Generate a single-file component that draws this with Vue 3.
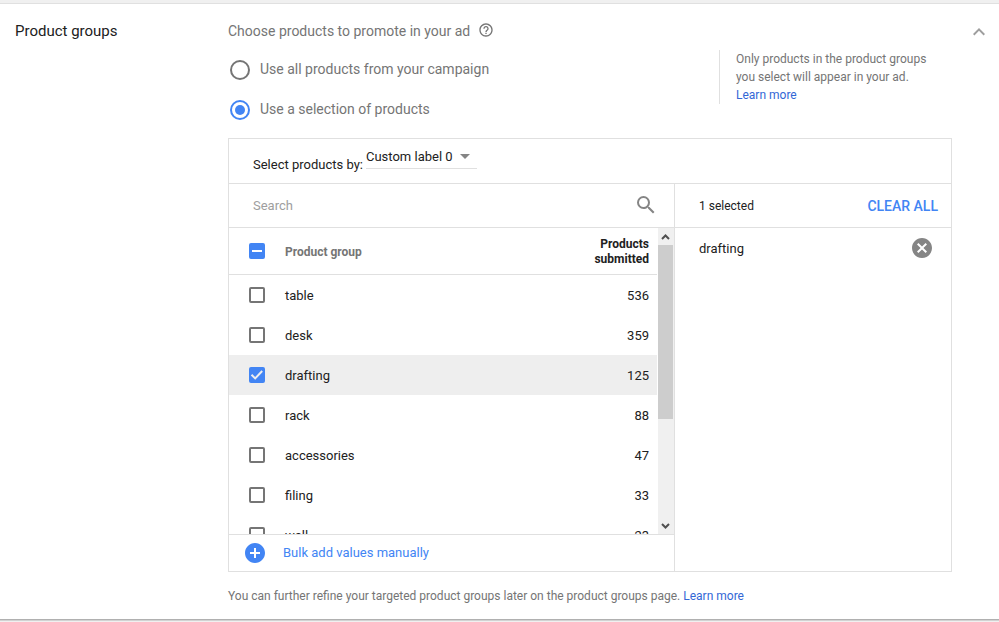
<script setup>
import { ref, computed } from 'vue'

const mode = ref('selection')
const attribute = ref('Custom label 0')
const attributes = ['Custom label 0', 'Custom label 1', 'Custom label 2']
const query = ref('')
const open = ref(true)
const list = ref(null)

const groups = ref([
  { name: 'table', count: 536, checked: false },
  { name: 'desk', count: 359, checked: false },
  { name: 'drafting', count: 125, checked: true },
  { name: 'rack', count: 88, checked: false },
  { name: 'accessories', count: 47, checked: false },
  { name: 'filing', count: 33, checked: false },
  { name: 'wall', count: 23, checked: false }
])

const visible = computed(() => groups.value.filter(g => g.name.includes(query.value.toLowerCase())))
const selected = computed(() => groups.value.filter(g => g.checked))
const allChecked = computed(() => selected.value.length === groups.value.length)
const someChecked = computed(() => selected.value.length > 0 && !allChecked.value)

function setAll(value) {
  groups.value.forEach(g => { g.checked = value })
}
function scrollList(step) {
  list.value.scrollTop += step
}
</script>

<template>
  <main class="page">
    <section class="card">
      <h2 class="title">Product groups</h2>

      <div class="content">
        <p class="lead">
          Choose products to promote in your ad
          <button class="icon-button help" type="button" aria-label="Help">
            <svg width="16" height="16" viewBox="0 0 24 24"><path d="M11 18h2v-2h-2v2zm1-16C6.48 2 2 6.48 2 12s4.480 10 10 10 10-4.480 10-10S17.520 2 12 2zm0 18c-4.410 0-8-3.590-8-8s3.590-8 8-8 8 3.590 8 8-3.590 8-8 8zm0-14c-2.210 0-4 1.790-4 4h2c0-1.100.9-2 2-2s2 .9 2 2c0 2-3 1.750-3 5h2c0-2.250 3-2.500 3-5 0-2.210-1.790-4-4-4z" /></svg>
          </button>
        </p>

        <div v-if="open" class="body">
          <div class="choice">
            <div class="radios">
              <label class="radio"><input v-model="mode" type="radio" name="mode" value="all"><span>Use all products from your campaign</span></label>
              <label class="radio"><input v-model="mode" type="radio" name="mode" value="selection"><span>Use a selection of products</span></label>
            </div>
            <aside class="hint">
              Only products in the product groups you select will appear in your ad.
              <a href="#">Learn more</a>
            </aside>
          </div>

          <div class="picker">
            <div class="attribute">
              <label for="attribute">Select products by:</label>
              <span class="dropdown">
                <select id="attribute" v-model="attribute">
                  <option v-for="a in attributes" :key="a">{{ a }}</option>
                </select>
                <svg width="24" height="24" viewBox="0 0 24 24" aria-hidden="true"><path d="M7 10l5 5 5-5z" /></svg>
              </span>
            </div>

            <div class="panes">
              <div class="pane">
                <div class="bar search">
                  <input v-model="query" type="text" placeholder="Search" aria-label="Search">
                  <svg width="24" height="24" viewBox="0 0 24 24" aria-hidden="true"><path d="M15.500 14h-.79l-.28-.27A6.471 6.471 0 0 0 16 9.500 6.500 6.500 0 1 0 9.500 16c1.610 0 3.090-.59 4.230-1.570l.27.28v.79l5 4.990L20.490 19l-4.990-5zm-6 0C7.010 14 5 11.990 5 9.500S7.010 5 9.500 5 14 7.010 14 9.500 11.990 14 9.500 14z" /></svg>
                </div>

                <div class="scroller">
                  <div ref="list" class="viewport">
                    <table>
                      <thead>
                        <tr>
                          <th class="tick">
                            <span class="box">
                              <input type="checkbox" aria-label="Select all" :checked="allChecked" :indeterminate="someChecked" @change="setAll($event.target.checked)">
                              <svg width="16" height="16" viewBox="0 0 16 16" aria-hidden="true"><path v-if="someChecked" d="M3 8h10" /><path v-else-if="allChecked" d="M2.500 7.700l3.700 3.700 7-7.400" /></svg>
                            </span>
                          </th>
                          <th class="name">Product group</th>
                          <th class="count">Products<br>submitted</th>
                        </tr>
                      </thead>
                      <tbody>
                        <tr v-for="g in visible" :key="g.name" :class="{ active: g.checked }">
                          <td class="tick">
                            <span class="box">
                              <input :id="'group-' + g.name" v-model="g.checked" type="checkbox">
                              <svg v-if="g.checked" width="16" height="16" viewBox="0 0 16 16" aria-hidden="true"><path d="M2.500 7.700l3.700 3.700 7-7.400" /></svg>
                            </span>
                          </td>
                          <td class="name"><label :for="'group-' + g.name">{{ g.name }}</label></td>
                          <td class="count">{{ g.count }}</td>
                        </tr>
                      </tbody>
                    </table>
                  </div>
                  <div class="scrollbar">
                    <button type="button" aria-label="Scroll up" @click="scrollList(-40)">
                      <svg width="9" height="6" viewBox="0 0 9 6"><path d="M1 5l3.500-3.500L8 5" /></svg>
                    </button>
                    <div class="track"><div class="thumb"></div></div>
                    <button type="button" aria-label="Scroll down" @click="scrollList(40)">
                      <svg width="9" height="6" viewBox="0 0 9 6"><path d="M1 1l3.500 3.500L8 1" /></svg>
                    </button>
                  </div>
                </div>

                <button class="bulk" type="button">
                  <svg width="24" height="24" viewBox="0 0 24 24" aria-hidden="true"><path d="M12 2C6.480 2 2 6.480 2 12s4.480 10 10 10 10-4.480 10-10S17.520 2 12 2zm5 11h-4v4h-2v-4H7v-2h4V7h2v4h4v2z" /></svg>
                  <span>Bulk add values manually</span>
                </button>
              </div>

              <div class="pane chosen">
                <div class="bar summary">
                  <span>{{ selected.length }} selected</span>
                  <button class="clear" type="button" @click="setAll(false)">CLEAR ALL</button>
                </div>
                <ul>
                  <li v-for="g in selected" :key="g.name">
                    {{ g.name }}
                    <button class="icon-button" type="button" :aria-label="'Remove ' + g.name" @click="g.checked = false">
                      <svg width="24" height="24" viewBox="0 0 24 24"><path d="M12 2C6.470 2 2 6.470 2 12s4.470 10 10 10 10-4.470 10-10S17.530 2 12 2zm5 13.590L15.590 17 12 13.410 8.410 17 7 15.590 10.590 12 7 8.410 8.410 7 12 10.590 15.590 7 17 8.410 13.410 12 17 15.590z" /></svg>
                    </button>
                  </li>
                </ul>
              </div>
            </div>
          </div>

          <p class="note">
            You can further refine your targeted product groups later on the product groups page.
            <a href="#">Learn more</a>
          </p>
        </div>
      </div>

      <button class="icon-button collapse" type="button" aria-label="Collapse" :aria-expanded="open" @click="open = !open">
        <svg width="24" height="24" viewBox="0 0 24 24"><path d="M12 8l-6 6 1.410 1.410L12 10.830l4.590 4.580L18 14z" /></svg>
      </button>
    </section>
  </main>
</template>

<style>
body {
  background: #f0f0f0;
}
</style>

<style scoped>
* {
  box-sizing: border-box;
}
.page {
  padding: 3px 0 2px;
  font-family: Roboto, "Liberation Sans", sans-serif;
  font-size: 13px;
  color: #212121;
}
.card {
  display: grid;
  grid-template-columns: 213px minmax(0, 1fr) 32px;
  padding: 16px 0 15px 15px;
  background: #fff;
  border-top: 1px solid #e0e0e0;
  border-bottom: 1px solid #b0b0b0;
  box-shadow: 0 1px 0 #d2d2d2;
}
button,
input,
select {
  font: inherit;
  color: inherit;
  margin: 0;
  padding: 0;
  border: 0;
  background: none;
}
button {
  cursor: pointer;
}
svg {
  display: block;
  fill: currentColor;
}
a {
  color: #3367d6;
  text-decoration: none;
}
.title {
  margin: 0;
  font-size: 15px;
  font-weight: 400;
  line-height: 22px;
}
.content {
  margin-right: 15px;
}
.lead {
  display: flex;
  align-items: center;
  gap: 8px;
  margin: 0;
  font-size: 14px;
  line-height: 22px;
  color: #757575;
}
.help {
  padding-bottom: 2px;
}
.collapse {
  align-self: start;
  color: #9e9e9e;
}
.choice {
  display: flex;
  justify-content: space-between;
  padding-top: 8px;
}
.radios {
  display: grid;
  padding-left: 2px;
}
.radio {
  display: flex;
  align-items: center;
  gap: 10px;
  height: 40px;
  font-size: 14px;
  line-height: 20px;
  color: #757575;
}
.radio span {
  padding-bottom: 2px;
}
.radio input {
  appearance: none;
  display: grid;
  place-items: center;
  width: 20px;
  height: 20px;
  border: 2px solid #757575;
  border-radius: 50%;
}
.radio input:checked {
  border-color: #4285f4;
}
.radio input:checked::before {
  content: "";
  width: 10px;
  height: 10px;
  border-radius: 50%;
  background: #4285f4;
}
.hint {
  align-self: start;
  width: 233px;
  padding: 0 24px 0 16px;
  border-left: 1px solid #e0e0e0;
  font-size: 12px;
  line-height: 18px;
  color: #757575;
}
.hint a {
  display: block;
}
.picker {
  margin-top: 8px;
  border: 1px solid #e0e0e0;
}
.attribute {
  display: flex;
  align-items: flex-start;
  gap: 3px;
  height: 45px;
  padding: 8px 24px 0;
  border-bottom: 1px solid #e0e0e0;
}
.attribute label {
  padding-top: 8px;
  line-height: 20px;
}
.dropdown {
  display: grid;
  grid-template-rows: 18px;
  align-items: center;
  width: 111px;
  height: 22px;
  border-bottom: 1px solid #e0e0e0;
}
.dropdown select,
.dropdown svg {
  grid-area: 1 / 1;
}
.dropdown select {
  appearance: none;
  height: 18px;
}
.dropdown svg {
  justify-self: end;
  color: #858585;
  pointer-events: none;
}
.panes {
  display: grid;
  grid-template-columns: minmax(0, 445fr) minmax(0, 277fr);
}
.chosen {
  border-left: 1px solid #e0e0e0;
}
.bar {
  display: flex;
  align-items: center;
  justify-content: space-between;
  height: 44px;
  border-bottom: 1px solid #e0e0e0;
}
.search {
  padding: 0 16px 0 24px;
}
.search input {
  flex: 1;
  min-width: 0;
  outline: 0;
}
.search input::placeholder {
  color: #9e9e9e;
}
.search svg {
  margin-bottom: 2px;
  color: #858585;
}
.summary {
  padding: 0 13px 0 24px;
  font-size: 12px;
}
.clear {
  font-size: 14px;
  font-weight: 500;
  color: #4285f4;
}
.scroller {
  display: flex;
  gap: 1px;
  height: 306px;
}
.viewport {
  flex: 1;
  overflow-y: auto;
  scrollbar-width: none;
}
table {
  width: 100%;
  border-collapse: separate;
  border-spacing: 0;
}
th {
  height: 47px;
  padding: 0;
  border-bottom: 1px solid #e0e0e0;
  font-size: 12px;
  line-height: 15px;
}
td {
  height: 40px;
  padding: 0;
}
.tick {
  width: 56px;
  padding-left: 20px;
}
.name {
  text-align: left;
}
th.name {
  padding-top: 2px;
  color: #757575;
}
.count {
  padding-right: 8px;
  text-align: right;
}
th.count {
  padding-top: 2px;
}
.active {
  background: #eee;
}
.box {
  display: grid;
  width: 16px;
  height: 16px;
}
.box input,
.box svg {
  grid-area: 1 / 1;
}
.box input {
  appearance: none;
  width: 16px;
  height: 16px;
  border: 2px solid #757575;
  border-radius: 2px;
}
.box input:checked,
.box input:indeterminate {
  border-color: #4285f4;
  background: #4285f4;
}
.box svg {
  fill: none;
  stroke: #fff;
  stroke-width: 2;
  pointer-events: none;
}
td .box svg {
  stroke: #eee;
}
.scrollbar {
  display: flex;
  flex-direction: column;
  width: 16px;
  background: #f0f0f0;
}
.scrollbar button {
  display: grid;
  place-items: center;
  width: 15px;
  height: 17px;
}
.scrollbar svg {
  fill: none;
  stroke: #505050;
  stroke-width: 2;
}
.track {
  flex: 1;
  padding-right: 1px;
}
.thumb {
  height: 64%;
  background: #cdcdcd;
}
.bulk {
  display: flex;
  align-items: center;
  gap: 16px;
  width: 100%;
  height: 37px;
  padding-left: 14px;
  border-top: 1px solid #e0e0e0;
  color: #4285f4;
}
.bulk span {
  padding-bottom: 2px;
}
ul {
  margin: 0;
  padding: 0;
  list-style: none;
}
li {
  display: flex;
  align-items: center;
  justify-content: space-between;
  height: 40px;
  padding: 0 17px 0 24px;
}
li .icon-button {
  color: #858585;
}
.note {
  margin: 16px 0 0;
  font-size: 12px;
  line-height: 16px;
  color: #757575;
}
</style>
